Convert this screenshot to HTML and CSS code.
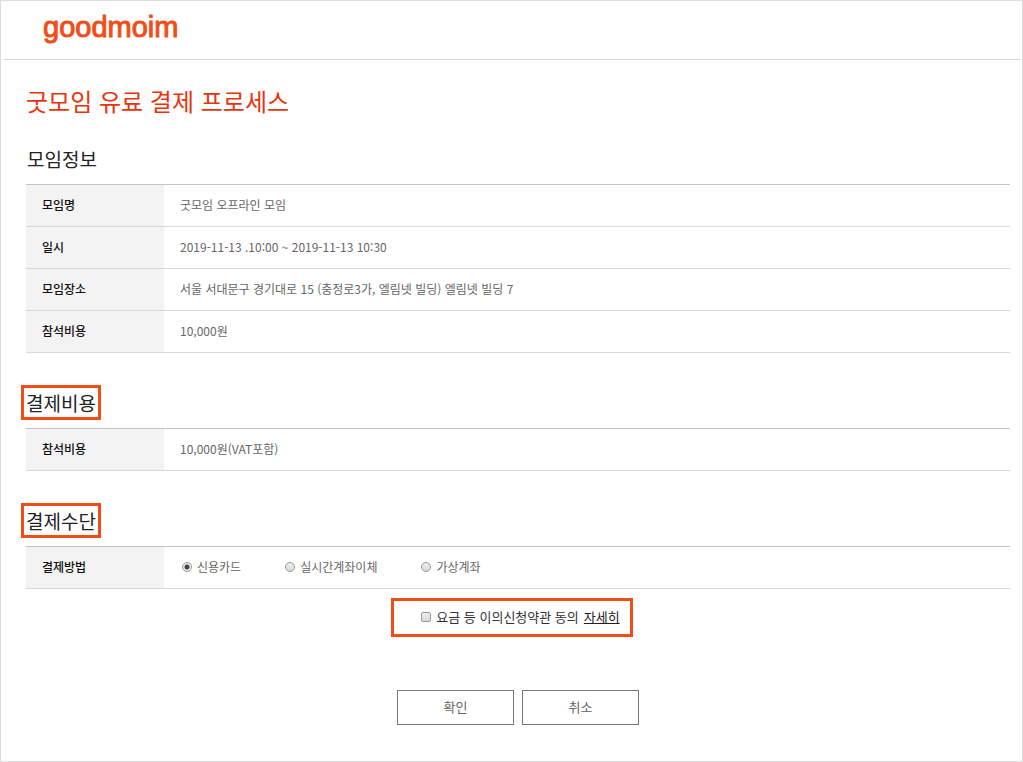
FILE: index.html
```
<!DOCTYPE html>
<html lang="ko">
<head>
    <meta charset="UTF-8">
    <meta name="viewport" content="width=device-width, initial-scale=1.0">
    <title>굿모임 유료 결제 프로세스</title>
    <link rel="stylesheet" href="styles.css">
</head>
<body>
    <div class="page">
        <header class="header">
            <a href="#" class="logo">goodmoim</a>
        </header>

        <form class="content">
            <h1>굿모임 유료 결제 프로세스</h1>

            <h2>모임정보</h2>
            <table class="info">
                <tr>
                    <th scope="row">모임명</th>
                    <td>굿모임 오프라인 모임</td>
                </tr>
                <tr>
                    <th scope="row">일시</th>
                    <td>2019-11-13 .10:00 ~ 2019-11-13 10:30</td>
                </tr>
                <tr>
                    <th scope="row">모임장소</th>
                    <td>서울 서대문구 경기대로 15 (충정로3가, 엘림넷 빌딩) 엘림넷 빌딩 7</td>
                </tr>
                <tr>
                    <th scope="row">참석비용</th>
                    <td>10,000원</td>
                </tr>
            </table>

            <h2 class="marked">결제비용</h2>
            <table class="info">
                <tr>
                    <th scope="row">참석비용</th>
                    <td>10,000원(VAT포함)</td>
                </tr>
            </table>

            <h2 class="marked">결제수단</h2>
            <table class="info">
                <tr>
                    <th scope="row">결제방법</th>
                    <td>
                        <div class="methods">
                            <label><input type="radio" name="method" value="card" checked>신용카드</label>
                            <label><input type="radio" name="method" value="transfer">실시간계좌이체</label>
                            <label><input type="radio" name="method" value="account">가상계좌</label>
                        </div>
                    </td>
                </tr>
            </table>

            <div class="agree">
                <div class="agree-box">
                    <label><input type="checkbox" name="agree">요금 등 이의신청약관 동의</label>
                    <a href="#">자세히</a>
                </div>
            </div>

            <div class="buttons">
                <button type="submit">확인</button>
                <button type="button">취소</button>
            </div>
        </form>
    </div>
</body>
</html>
```
FILE: styles.css
```
* {
    box-sizing: border-box;
}
body {
    margin: 0;
    background: #fff;
    color: #666;
    font-family: "Noto Sans CJK KR", sans-serif;
    font-size: 12px;
}
.page {
    min-height: 100vh;
    padding: 0 2px 0 3px;
    border: 1px solid #ddd;
}

/* header */
.header {
    padding: 8px 39px 14px;
    border-bottom: 1px solid #d8d8d8;
}
.logo {
    display: block;
    color: #f04e16;
    font-family: "Liberation Sans", Arial, sans-serif;
    font-size: 29px;
    line-height: 36px;
    text-decoration: none;
    -webkit-text-stroke: 1px #f04e16;
}

/* content */
.content {
    padding: 23px 10px 24px 22px;
}
h1 {
    margin: 0 0 22px;
    color: #e8340c;
    font-size: 24px;
    font-weight: 400;
    line-height: 36px;
}
h2 {
    width: fit-content;
    margin: 32px 0 8px -5px;
    padding: 0 3px;
    border: 3px solid transparent;
    color: #222;
    font-size: 19px;
    font-weight: 400;
    line-height: 29px;
}
h1 + h2 {
    margin-top: 0;
}
.marked {
    padding: 0 2px;
    border-color: #f04e16;
}
.info {
    width: 100%;
    border-collapse: collapse;
    border-top: 1px solid #c4c4c4;
}
.info th,
.info td {
    height: 42px;
    padding: 0 16px 2px;
    border-bottom: 1px solid #d8d8d8;
    text-align: left;
}
.info th {
    width: 138px;
    background: #f3f3f3;
    color: #111;
    font-weight: 500;
}

/* payment methods */
.methods {
    display: flex;
    gap: 42px;
}
label {
    display: flex;
    align-items: center;
    gap: 5px;
}
input {
    appearance: none;
    width: 10px;
    height: 10px;
    margin: 0;
    border: 1px solid #999;
    border-radius: 2px;
    background: linear-gradient(#eee, #d8d8d8);
}
input[type="radio"] {
    margin-left: 2px;
    border-radius: 50%;
}
input[type="radio"]:checked {
    background: radial-gradient(circle, #444 2px, #eee 3px);
}

/* agreement */
.agree {
    display: flex;
    justify-content: center;
    margin: 9px 0 53px;
    padding-right: 12px;
}
.agree-box {
    display: flex;
    gap: 5px;
    padding: 0 10px 2px 27px;
    border: 3px solid #f04e16;
    color: #333;
    font-size: 13px;
    line-height: 31px;
}
.agree-box a {
    color: #222;
}

/* buttons */
.buttons {
    display: flex;
    justify-content: center;
    gap: 8px;
}
.buttons button {
    width: 117px;
    height: 35px;
    padding: 0 0 3px;
    border: 1px solid #777;
    background: #fff;
    color: #666;
    font-family: inherit;
    font-size: 13px;
    cursor: pointer;
}
```
